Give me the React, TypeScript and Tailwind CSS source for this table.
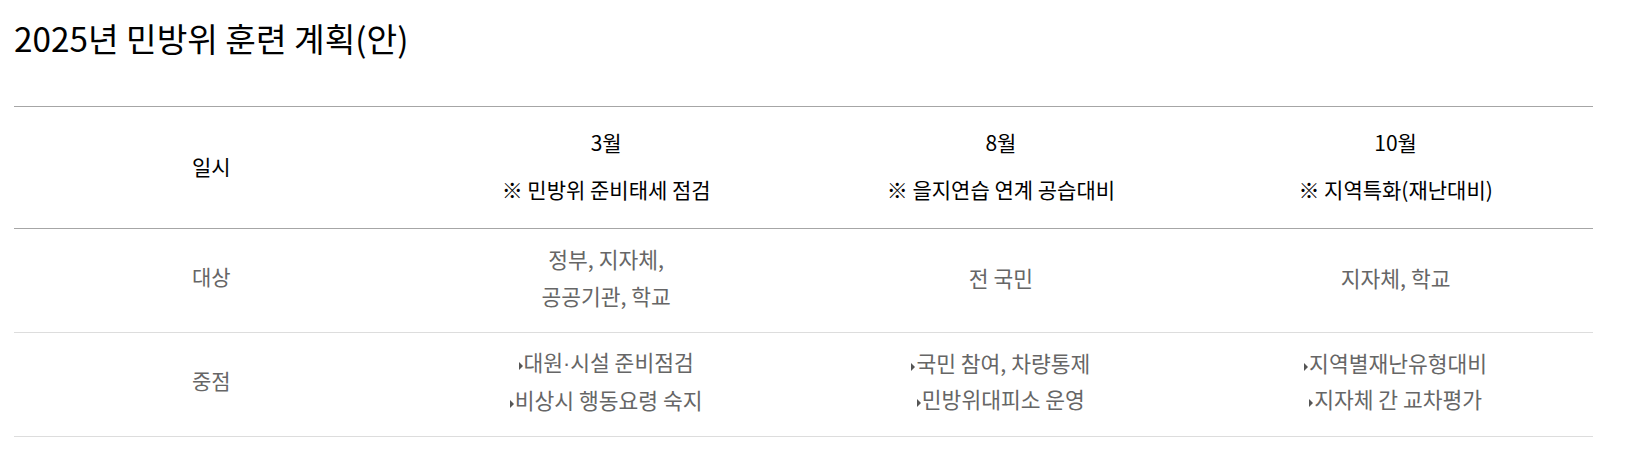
import React from "react";

const months = [
  { month: "3월", note: "※ 민방위 준비태세 점검" },
  { month: "8월", note: "※ 을지연습 연계 공습대비" },
  { month: "10월", note: "※ 지역특화(재난대비)" },
];

const targets = [["정부, 지자체,", "공공기관, 학교"], ["전 국민"], ["지자체, 학교"]];

const focus: React.ReactNode[][] = [
  [
    <>
      대원<span style={{ fontFamily: '"Liberation Sans", sans-serif' }}>·</span>시설 준비점검
    </>,
    "비상시 행동요령 숙지",
  ],
  ["국민 참여, 차량통제", "민방위대피소 운영"],
  ["지역별재난유형대비", "지자체 간 교차평가"],
];

function Arrow() {
  return (
    <svg width="4" height="8" viewBox="0 0 4 8" className="inline-block mr-[1px] align-[1px]">
      <path d="M0 0 L4 4 L0 8 Z" fill="#555" />
    </svg>
  );
}

export default function App() {
  return (
    <div
      className="bg-white min-h-[457px] pl-[14px] pt-[18px]"
      style={{ fontFamily: '"Noto Sans CJK KR", "Noto Sans", sans-serif' }}
    >
      <h2 className="text-[33.3px] leading-[40px] text-black font-normal">2025년 민방위 훈련 계획(안)</h2>

      <div className="mt-[48px] w-[1579px] border-t border-[#a6a6a6]">
        {/* 일시 */}
        <div className="grid grid-cols-4 h-[122px] border-b border-[#a6a6a6] text-black text-[21px] pb-[4px]">
          <div className="flex items-center justify-center pt-[2px]">일시</div>
          {months.map((m) => (
            <div key={m.month} className="flex flex-col items-center justify-center leading-[47px]">
              <p>{m.month}</p>
              <p>{m.note}</p>
            </div>
          ))}
        </div>

        {/* 대상 */}
        <div className="grid grid-cols-4 h-[104px] border-b border-[#dddddd] text-[#666666] text-[21.5px] pb-[7px]">
          <div className="flex items-center justify-center text-[21px]">대상</div>
          {targets.map((lines, i) => (
            <div key={i} className="flex flex-col items-center justify-center leading-[37px]">
              {lines.map((l) => (
                <p key={l}>{l}</p>
              ))}
            </div>
          ))}
        </div>

        {/* 중점 */}
        <div className="grid grid-cols-4 h-[104px] border-b border-[#dddddd] text-[#666666] text-[21.5px] pb-[7px]">
          <div className="flex items-center justify-center text-[21px]">중점</div>
          {focus.map((lines, i) => (
            <div key={i} className="flex flex-col items-center justify-center leading-[36px]">
              {lines.map((l, j) => (
                <p key={j}>
                  <Arrow />
                  {l}
                </p>
              ))}
            </div>
          ))}
        </div>
      </div>
    </div>
  );
}
